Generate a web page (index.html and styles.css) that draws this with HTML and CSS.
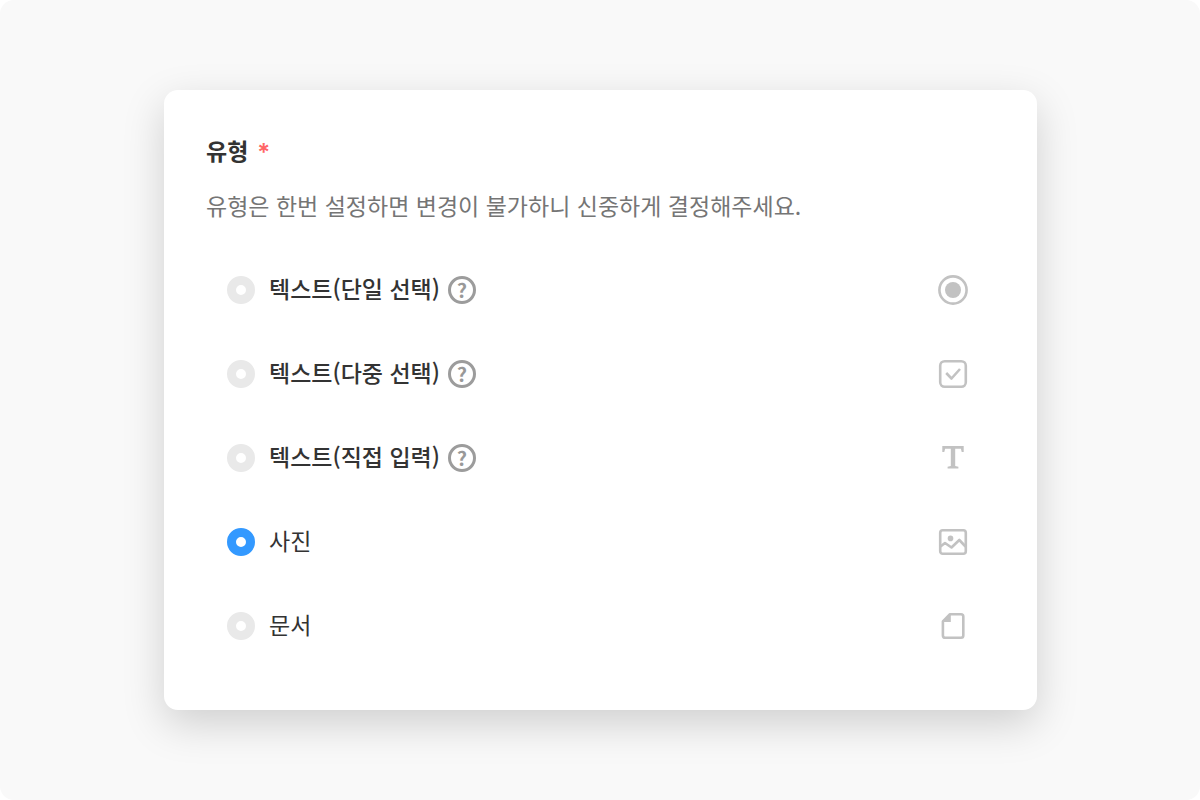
FILE: index.html
```html
<!DOCTYPE html>
<html lang="ko">
<head>
<meta charset="utf-8">
<meta name="viewport" content="width=device-width, initial-scale=1">
<title>유형</title>
<link rel="stylesheet" href="styles.css">
</head>
<body>
<main class="page">
  <form class="card">
    <fieldset class="field" aria-describedby="type-hint">
      <legend class="title">유형 <span class="required">*</span></legend>
      <p class="hint" id="type-hint">유형은 한번 설정하면 변경이 불가하니 신중하게 결정해주세요.</p>
      <ul class="options">
        <li class="option">
          <input class="radio" type="radio" name="type" id="type-single">
          <label class="label label-medium" for="type-single">텍스트(단일 선택)</label>
          <button class="help" type="button">?</button>
          <svg class="icon" viewBox="0 0 30 30" aria-hidden="true"><circle class="line" cx="15" cy="15" r="13.6"/><circle class="solid" cx="15" cy="15" r="8"/></svg>
        </li>
        <li class="option">
          <input class="radio" type="radio" name="type" id="type-multi">
          <label class="label label-medium" for="type-multi">텍스트(다중 선택)</label>
          <button class="help" type="button">?</button>
          <svg class="icon" viewBox="0 0 30 30" aria-hidden="true"><rect class="line" x="2.2" y="2.2" width="25.6" height="25.6" rx="4.5"/><path class="line" d="M8.2 14l5.3 5.5L22 10"/></svg>
        </li>
        <li class="option">
          <input class="radio" type="radio" name="type" id="type-input">
          <label class="label label-medium" for="type-input">텍스트(직접 입력)</label>
          <button class="help" type="button">?</button>
          <svg class="icon" viewBox="0 0 30 30" aria-hidden="true"><path class="solid" d="M4.3 3h21.4v6h-2l-.8-3.2h-5.7v17.3l3.2.7v1.7H9.6v-1.7l3.2-.7V5.800H7.100L6.300 9h-2z"/></svg>
        </li>
        <li class="option">
          <input class="radio" type="radio" name="type" id="type-photo" checked>
          <label class="label" for="type-photo">사진</label>
          <svg class="icon" viewBox="0 0 30 30" aria-hidden="true"><rect class="line" x="2.2" y="3.2" width="25.6" height="23.6" rx="2.5"/><circle class="solid" cx="12.5" cy="11.4" r="2.8"/><path class="line" d="M2.5 19.5L7 16l6.500 4.500 7.800-7.500 6.200 6.500"/></svg>
        </li>
        <li class="option">
          <input class="radio" type="radio" name="type" id="type-doc">
          <label class="label" for="type-doc">문서</label>
          <svg class="icon" viewBox="0 0 30 30" aria-hidden="true"><path class="line" d="M12 3.2h11q2.300 0 2.300 2.300v19q0 2.300-2.300 2.300H7.200q-2.300 0-2.300-2.300V10.500z"/><path class="solid" d="M12.800 3v8h-8z"/></svg>
        </li>
      </ul>
    </fieldset>
  </form>
</main>
</body>
</html>
```
FILE: styles.css
```css
* {
  box-sizing: border-box;
}

body {
  margin: 0;
  background: #fff;
  color: #333;
  font-family: "Noto Sans CJK KR", sans-serif;
  font-size: 23px;
  line-height: 34px;
}

.page {
  min-height: 100vh;
  padding: 90px 163px 90px 164px;
  border-radius: 14px;
  background: #f9f9f9;
}

.card {
  padding: 43px 42px 42px;
  border-radius: 14px;
  background: #fff;
  box-shadow: 0 14px 42px rgba(0, 0, 0, 0.17);
}

.field {
  min-width: 0;
  margin: 0;
  padding: 0;
  border: 0;
}

.title {
  display: flex;
  gap: 9px;
  padding: 0;
  font-weight: 700;
}

.required {
  padding-top: 3px;
  color: #ff6666;
  font: 600 24px/34px Inter, sans-serif;
}

.hint {
  margin: 18px 0 0;
  color: #757575;
}

.options {
  margin: 26px 0 0;
  padding: 0 27px 0 21px;
  list-style: none;
}

.option {
  display: flex;
  align-items: center;
  height: 84px;
}

.radio {
  appearance: none;
  width: 28px;
  height: 28px;
  margin: 0 14px 0 0;
  border: 9px solid #e9e9e9;
  border-radius: 50%;
  background: #fff;
}

.radio:checked {
  border-color: #3399ff;
}

.label {
  padding-bottom: 4px;
}

.label-medium {
  font-weight: 500;
}

.help {
  width: 28px;
  height: 28px;
  margin: 0 0 0 8px;
  padding: 0;
  border: 3px solid #9c9c9c;
  border-radius: 50%;
  background: none;
  color: #999;
  font: 700 20px/20px "Noto Sans CJK KR", sans-serif;
}

.icon {
  width: 30px;
  height: 30px;
  margin-left: auto;
}

.line {
  fill: none;
  stroke: #c2c2c2;
  stroke-width: 2.6;
  stroke-linejoin: round;
}

.solid {
  fill: #c2c2c2;
}
```
